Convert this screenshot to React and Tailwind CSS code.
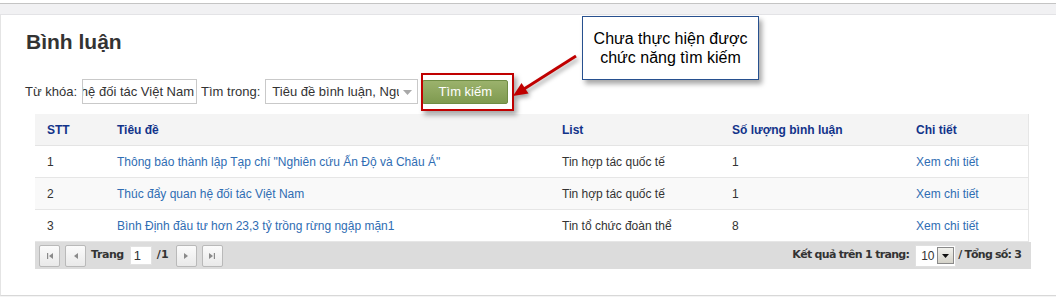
const rows = [
  { stt: 1, title: 'Thông báo thành lập Tạp chí "Nghiên cứu Ấn Độ và Châu Á"', list: 'Tin hợp tác quốc tế', count: 1 },
  { stt: 2, title: 'Thúc đẩy quan hệ đối tác Việt Nam', list: 'Tin hợp tác quốc tế', count: 1 },
  { stt: 3, title: 'Bình Định đầu tư hơn 23,3 tỷ trồng rừng ngập mặn1', list: 'Tin tổ chức đoàn thể', count: 8 },
]

const cols = 'grid grid-cols-[70px_445px_170px_184px_1fr]'

function PagerButton({ kind }) {
  return (
    <div className="w-[21px] h-[22px] rounded-[2px] border border-[#b9b9b9] bg-gradient-to-b from-[#fbfbfb] to-[#e9e9e9] flex items-center justify-center">
      <svg width="8" height="8" viewBox="0 0 8 8" fill="#8a8a8a">
        {kind === 'first' && (<><rect x="1" y="1" width="1.2" height="6" /><path d="M7 1 L3 4 L7 7 Z" /></>)}
        {kind === 'prev' && <path d="M6 1 L2 4 L6 7 Z" />}
        {kind === 'next' && <path d="M2 1 L6 4 L2 7 Z" />}
        {kind === 'last' && (<><path d="M1 1 L5 4 L1 7 Z" /><rect x="5.8" y="1" width="1.2" height="6" /></>)}
      </svg>
    </div>
  )
}

export default function App() {
  return (
    <div className="relative w-[1056px] h-[297px] overflow-hidden bg-white font-['Liberation_Sans',Arial,sans-serif] text-[#333]">
      {/* top strip */}
      <div className="h-[3px] bg-white" />
      <div className="h-[12px] border-t border-b border-t-[#c4c4c4] border-b-[#e3e3e6] bg-[#f1f1f3]" />

      {/* panel */}
      <div className="h-[281px] border-l border-b border-l-[#e4e4e4] border-b-[#d8d8d8] pl-[24px] pt-[15px]">
        <h1 className="pl-[1px] text-[21px] leading-[24px] font-bold text-[#333]">Bình luận</h1>

        {/* search row */}
        <div className="mt-[25px] h-[25px] flex items-center text-[13px] text-[#333]">
          <span>Từ khóa:</span>
          <div className="ml-[5px] w-[115px] h-[25px] border border-[#c9c9c9] bg-white flex items-center justify-end overflow-hidden whitespace-nowrap pr-[2px]">
            Thúc đẩy quan hệ đối tác Việt Nam
          </div>
          <span className="ml-[4px]">Tìm trong:</span>
          <div className="ml-[5px] w-[153px] h-[25px] border border-[#c9c9c9] bg-white flex items-center pl-[6px] relative overflow-hidden whitespace-nowrap">
            <span className="w-[127px] overflow-hidden">Tiêu đề bình luận, Người bình luận</span>
            <svg className="absolute right-[5px] top-[10px]" width="9" height="5" viewBox="0 0 9 5"><path d="M0 0 H9 L4.5 5 Z" fill="#a9a9a9" /></svg>
          </div>
          <div className="ml-[4px] w-[86px] h-[24px] rounded-[2px] border border-[#6f8c44] bg-gradient-to-b from-[#9bb26c] to-[#7f9a50] text-white flex items-center justify-center">
            Tìm kiếm
          </div>
        </div>

        {/* table */}
        <div className="mt-[10px] ml-[10px] w-[994px] border-r border-[#e6e6e6] text-[12px]">
          <div className={`${cols} h-[32px] items-center bg-[#f4f4f4] border-b border-[#e4e4e4] font-bold text-[#12338a]`}>
            <div className="pl-[12px]">STT</div>
            <div className="pl-[12px]">Tiêu đề</div>
            <div className="pl-[12px]">List</div>
            <div className="pl-[12px]">Số lượng bình luận</div>
            <div className="pl-[12px]">Chi tiết</div>
          </div>
          {rows.map((r, i) => (
            <div
              key={r.stt}
              className={`${cols} h-[32px] items-center border-b border-[#e6e6e6] ${i === 1 ? 'bg-[#f9f9f9]' : 'bg-white'}`}
            >
              <div className="pl-[12px]">{r.stt}</div>
              <div className="pl-[12px] text-[#2f6db3] whitespace-nowrap">{r.title}</div>
              <div className="pl-[12px]">{r.list}</div>
              <div className="pl-[12px]">{r.count}</div>
              <div className="pl-[12px] text-[#2f6db3]">Xem chi tiết</div>
            </div>
          ))}
        </div>

        {/* pager */}
        <div className="ml-[10px] w-[996px] h-[27px] bg-[#dcdcdc] flex items-center pl-[4px] pr-[10px] font-['DejaVu_Sans',Tahoma,sans-serif] text-[11px] font-bold text-[#333]">
          <PagerButton kind="first" />
          <div className="ml-[5px]"><PagerButton kind="prev" /></div>
          <span className="ml-[5px] tracking-[-0.4px]">Trang</span>
          <div className="ml-[6px] w-[22px] h-[19px] bg-white border border-[#e2e2e2] flex items-center pl-[3px] font-['Liberation_Sans',Arial,sans-serif] font-normal text-[13px]">1</div>
          <span className="ml-[5px]">/1</span>
          <div className="ml-[7px]"><PagerButton kind="next" /></div>
          <div className="ml-[5px]"><PagerButton kind="last" /></div>

          <span className="ml-auto tracking-[-0.7px]">Kết quả trên 1 trang:</span>
          <div className="ml-[6px] w-[41px] h-[22px] bg-white border border-[#e0e0e0] flex items-center pl-[5px] font-['Liberation_Sans',Arial,sans-serif] font-normal text-[12px]">
            <span>10</span>
            <div className="ml-auto mr-[1px] w-[17px] h-[17px] border border-[#8a8a8a] bg-gradient-to-b from-[#f2f2ee] to-[#d4d2c8] flex items-center justify-center">
              <svg width="7" height="4" viewBox="0 0 7 4"><path d="M0 0 H7 L3.5 4 Z" fill="#111" /></svg>
            </div>
          </div>
          <span className="ml-[2px] tracking-[-0.8px]">/ Tổng số: 3</span>
        </div>
      </div>
      <div className="h-full bg-[#f4f4f4]" />

      {/* annotation: red highlight */}
      <div className="absolute left-[421px] top-[73px] w-[93px] h-[38px] border-2 border-[#c00000] shadow-[3px_4px_5px_rgba(0,0,0,0.35)]" />

      {/* annotation: arrow */}
      <svg className="absolute left-0 top-0" width="1056" height="297" viewBox="0 0 1056 297">
        <g style={{ filter: 'drop-shadow(2px 3px 2px rgba(0,0,0,0.35))' }}>
          <line x1="576" y1="56" x2="524" y2="89" stroke="#c00000" strokeWidth="3" />
          <path d="M513 96 L528.5 93.5 L521.5 83 Z" fill="#c00000" />
        </g>
      </svg>

      {/* annotation: callout */}
      <div className="absolute left-[582px] top-[16px] w-[177px] h-[64px] bg-white border-[1.5px] border-[#27508f] shadow-[3px_4px_5px_rgba(0,0,0,0.35)] flex items-center justify-center text-center text-[16px] leading-[19px] text-black">
        <div>Chưa thực hiện được<br />chức năng tìm kiếm</div>
      </div>
    </div>
  )
}
